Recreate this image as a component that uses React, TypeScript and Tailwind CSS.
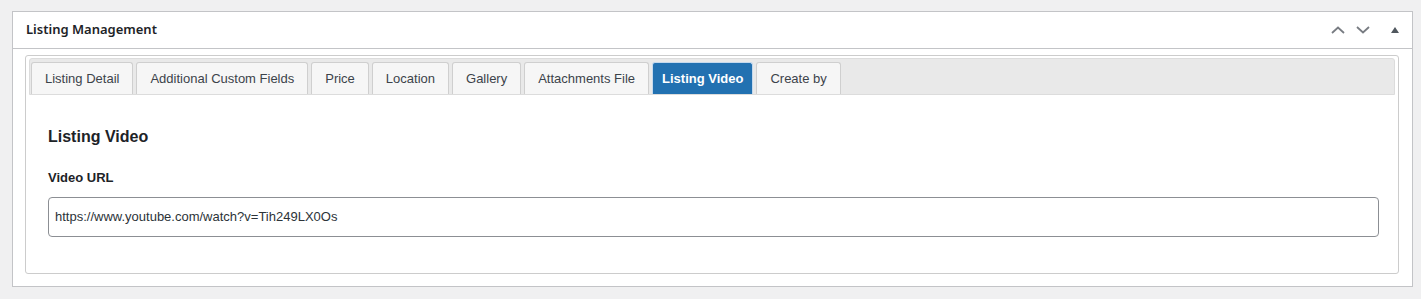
import React from "react";

const tabs = [
  "Listing Detail",
  "Additional Custom Fields",
  "Price",
  "Location",
  "Gallery",
  "Attachments File",
  "Listing Video",
  "Create by",
];

export default function App() {
  return (
    <div className="w-[1421px] h-[299px] bg-[#f0f0f1] pt-[11px] pl-[12px] pr-[8px]" style={{ fontFamily: "'Liberation Sans', Arial, sans-serif" }}>
      <div className="w-[1401px] h-[276px] bg-white border border-[#c3c4c7]">
        <div className="h-[37px] flex items-center justify-between border-b border-[#c3c4c7] pl-[13px] pr-[13px]">
          <span className="text-[13px] font-semibold text-[#1d2327]" style={{ fontFamily: "'Noto Sans', sans-serif" }}>Listing Management</span>
          <div className="flex items-center">
            <svg width="16" height="16" viewBox="0 0 16 16" className="mr-[9px]">
              <path d="M2 11 L8 5.5 L14 11" fill="none" stroke="#787c82" strokeWidth="1.8" />
            </svg>
            <svg width="16" height="16" viewBox="0 0 16 16" className="mr-[20px]">
              <path d="M2 5 L8 10.5 L14 5" fill="none" stroke="#787c82" strokeWidth="1.8" />
            </svg>
            <svg width="8" height="6" viewBox="0 0 8 6">
              <path d="M0 6 L4 0 L8 6 Z" fill="#50575e" />
            </svg>
          </div>
        </div>
        <div className="pt-[6px] pl-[12px] pr-[13px]">
          <div className="h-[219px] border border-[#ccc] rounded-[3px] pt-[2px] px-[3px]">
            <div className="h-[37px] bg-[#e9e9e9] rounded-t-[3px] flex items-end pl-[1px] gap-[3px] border border-[#dcdcdc]">
              {tabs.map((t) => {
                const active = t === "Listing Video";
                return (
                  <div
                    key={t}
                    className={
                      active
                        ? "h-[32px] px-[9px] flex items-center text-[13px] font-bold text-white bg-[#2271b1] border border-[#c5d9ed] border-b-0 rounded-t-[3px]"
                        : "h-[32px] px-[13px] flex items-center text-[13px] text-[#3c434a] bg-[#f6f6f6] border border-[#cfcfcf] border-b-0 rounded-t-[3px]"
                    }
                  >
                    {t}
                  </div>
                );
              })}
            </div>
            <div className="pl-[19px] pr-[16px]">
              <div className="mt-[32px] text-[16px] font-bold text-[#1d2327] leading-[20px]">Listing Video</div>
              <div className="mt-[23px] text-[13px] font-bold text-[#1d2327] leading-[16px]">Video URL</div>
              <div className="mt-[11px] h-[40px] border border-[#8c8f94] rounded-[4px] flex items-center px-[6px] text-[13px] text-[#2c3338]">
                https://www.youtube.com/watch?v=Tih249LX0Os
              </div>
            </div>
          </div>
        </div>
      </div>
    </div>
  );
}
